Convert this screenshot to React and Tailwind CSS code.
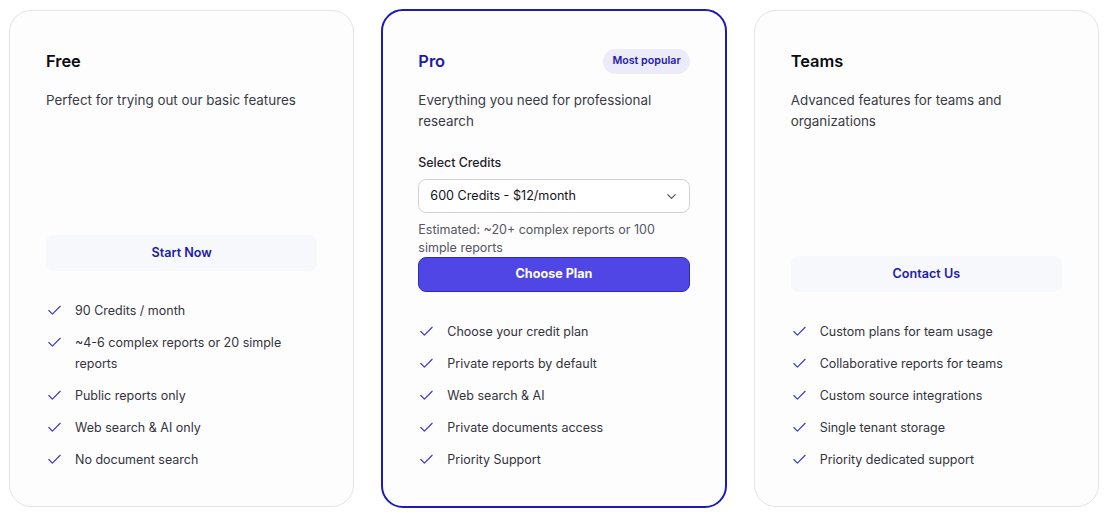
import { Check, ChevronDown } from "lucide-react";

const plans = [
    {
        name: "Free",
        description: "Perfect for trying out our basic features",
        cta: "Start Now",
        features: [
            "90 Credits / month",
            "~4-6 complex reports or 20 simple reports",
            "Public reports only",
            "Web search & AI only",
            "No document search",
        ],
    },
    {
        name: "Pro",
        popular: true,
        description: "Everything you need for professional research",
        cta: "Choose Plan",
        features: [
            "Choose your credit plan",
            "Private reports by default",
            "Web search & AI",
            "Private documents access",
            "Priority Support",
        ],
    },
    {
        name: "Teams",
        description: "Advanced features for teams and organizations",
        cta: "Contact Us",
        features: [
            "Custom plans for team usage",
            "Collaborative reports for teams",
            "Custom source integrations",
            "Single tenant storage",
            "Priority dedicated support",
        ],
    },
];

function PlanCard({ name, popular, description, cta, features }) {
    return (
        <div
            className={
                popular
                    ? "bg-[#fdfdfe] rounded-[22px] border-2 border-[#1c1cb4] pt-9 pb-9 px-[35px] -my-px flex flex-col"
                    : "bg-[#fdfdfe] rounded-[22px] border border-[#e3e4e8] p-9 flex flex-col"
            }
        >
            <div className="flex items-center justify-between h-7">
                <h3
                    className={
                        popular
                            ? "text-[16.4px] font-semibold text-[#1c1ca8]"
                            : "text-[16.4px] font-semibold text-[#0b0b0f]"
                    }
                >
                    {name}
                </h3>
                {popular && (
                    <span className="bg-[#ebebfa] text-[#1c1ca8] text-[10.7px] font-semibold px-[9px] h-[25px] flex items-center rounded-full">
                        Most popular
                    </span>
                )}
            </div>

            <p className="mt-[15px] text-[13.4px] leading-[21px] text-[#3a3b44]">
                {description}
            </p>

            <div className="min-h-[124px]">
                {popular && (
                    <div className="pt-[21px]">
                        <label className="block text-[12.4px] leading-5 font-medium text-[#1f2028]">
                            Select Credits
                        </label>
                        <div className="mt-[6px] h-[34px] border border-[#cfd1d6] rounded-lg flex items-center justify-between pl-[11px] pr-[10px] bg-white">
                            <span className="text-[12.6px] text-[#111217]">
                                600 Credits - $12/month
                            </span>
                            <ChevronDown size={15} strokeWidth={1.8} className="text-[#4b4d55]" />
                        </div>
                        <p className="mt-2 text-[12.5px] leading-[18px] text-[#55575f]">
                            Estimated: ~20+ complex reports or 100 simple reports
                        </p>
                    </div>
                )}
            </div>

            {popular ? (
                <button className="h-[35px] w-full rounded-lg bg-[#4f46e5] border border-[#2f2cb8] text-white text-[12.6px] font-bold">
                    {cta}
                </button>
            ) : (
                <button className="h-[36px] w-full rounded-lg bg-[#f7f8fb] text-[#1c1ca8] text-[12.6px] font-semibold">
                    {cta}
                </button>
            )}

            <ul className="mt-[29px] flex flex-col gap-[11px]">
                {features.map((f) => (
                    <li key={f} className="flex items-start gap-[12px]">
                        <Check
                            size={17}
                            strokeWidth={1.6}
                            className="text-[#3b34c8] mt-[2px] shrink-0"
                        />
                        <span className="text-[12.5px] leading-[21px] text-[#33343c]">
                            {f}
                        </span>
                    </li>
                ))}
            </ul>
        </div>
    );
}

export default function App() {
    return (
        <div
            className="min-h-screen bg-white px-[9px] pt-[10px]"
            style={{ fontFamily: "Inter, 'Noto Sans', sans-serif" }}
        >
            <div className="grid grid-cols-3 gap-[27px]">
                {plans.map((plan) => (
                    <PlanCard key={plan.name} {...plan} />
                ))}
            </div>
        </div>
    );
}
